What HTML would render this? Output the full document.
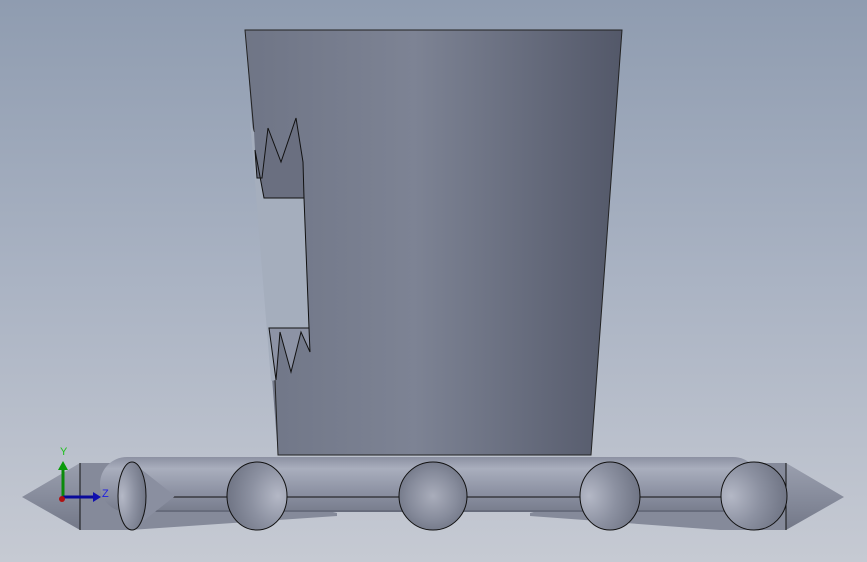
<!DOCTYPE html>
<html><head><style>html,body{margin:0;padding:0;width:867px;height:562px;overflow:hidden}</style></head>
<body>
<svg width="867" height="562" viewBox="0 0 867 562" xmlns="http://www.w3.org/2000/svg">
<defs>
<linearGradient id="bg" x1="0" y1="0" x2="0" y2="1">
<stop offset="0" stop-color="#8f9cb0"/><stop offset="0.5" stop-color="#aab3c3"/><stop offset="1" stop-color="#c6cad3"/></linearGradient>
<linearGradient id="cup" x1="245" y1="0" x2="622" y2="0" gradientUnits="userSpaceOnUse">
<stop offset="0" stop-color="#6f7586"/><stop offset="0.45" stop-color="#7d8394"/><stop offset="1" stop-color="#535869"/></linearGradient>
<linearGradient id="bar" x1="0" y1="457" x2="0" y2="515" gradientUnits="userSpaceOnUse">
<stop offset="0" stop-color="#8c91a2"/><stop offset="0.2" stop-color="#a9aebd"/><stop offset="0.6" stop-color="#8d92a3"/><stop offset="1" stop-color="#747989"/></linearGradient>
<radialGradient id="coneR" cx="0.85" cy="0.5" r="0.9">
<stop offset="0" stop-color="#b4b8c6"/><stop offset="0.5" stop-color="#8c91a1"/><stop offset="1" stop-color="#6c7181"/></radialGradient>
<radialGradient id="coneL" cx="0.15" cy="0.5" r="0.9">
<stop offset="0" stop-color="#b4b8c6"/><stop offset="0.5" stop-color="#8c91a1"/><stop offset="1" stop-color="#6c7181"/></radialGradient>
<radialGradient id="coneC" cx="0.5" cy="0.5" r="0.6">
<stop offset="0" stop-color="#a9adbb"/><stop offset="0.6" stop-color="#868b9b"/><stop offset="1" stop-color="#6c7181"/></radialGradient>
<linearGradient id="tip" x1="0" y1="0" x2="0" y2="1">
<stop offset="0" stop-color="#9a9fae"/><stop offset="0.5" stop-color="#878c9c"/><stop offset="1" stop-color="#737888"/></linearGradient>
</defs>
<rect width="867" height="562" fill="url(#bg)"/>
<polygon points="245,30 622,30 591,455 278,455" fill="url(#cup)"/>
<polyline points="254,132 245,30 622,30 591,455 278,455 275,380" fill="none" stroke="#222"/>
<polygon points="254,132 255,150 264,198 304,198 309,328 269,328 276,380 271,381 250,120" fill="#a5aebd"/>
<polygon points="255,150 264,198 304,198 303,162 296,118 281,162 268,128 262,178 257,178" fill="#6a6f80" stroke="#111" stroke-width="1"/>
<polygon points="269,328 309,328 310,352 301,332 291,372 280,332 276,380" fill="#8d93a5" stroke="#111" stroke-width="1"/>
<polyline points="264,198 304,198 309,328 269,328" fill="none" stroke="#111"/>
<polygon points="80,463 130,463 337,513 337,516 130,530 80,530" fill="#858a9a"/>
<polygon points="786,463 720,463 530,513 530,516 720,530 786,530" fill="#858a9a"/>
<polygon points="80,463 22,497 80,530" fill="url(#tip)"/>
<polygon points="786,463 844,497 786,530" fill="url(#tip)"/>
<line x1="80" y1="463" x2="80" y2="530" stroke="#111"/>
<line x1="786" y1="463" x2="786" y2="530" stroke="#111"/>
<rect x="100" y="457" width="660" height="55" rx="27" fill="url(#bar)"/>
<line x1="145" y1="497" x2="725" y2="497" stroke="#111"/>
<line x1="145" y1="511" x2="725" y2="511" stroke="#555a6a"/>
<polygon points="132,462 175,496 132,530" fill="#8a8fa0"/>
<polygon points="754,462 790,496 754,530" fill="#8a8fa0"/>
<g stroke="#111" stroke-width="1">
<ellipse cx="132" cy="496" rx="14" ry="34" fill="url(#coneL)"/>
<ellipse cx="257" cy="496" rx="30" ry="34" fill="url(#coneR)"/>
<ellipse cx="433" cy="496" rx="34" ry="34" fill="url(#coneC)"/>
<ellipse cx="610" cy="496" rx="30" ry="34" fill="url(#coneL)"/>
<ellipse cx="754" cy="496" rx="33" ry="34" fill="url(#coneL)"/>
</g>
<line x1="63" y1="498" x2="63" y2="468" stroke="#0a8a0a" stroke-width="3"/>
<polygon points="58,470 68,470 63,461" fill="#0a9a0a"/>
<line x1="63" y1="497" x2="94" y2="497" stroke="#0a0a9a" stroke-width="3"/>
<polygon points="93,492 93,502 101,497" fill="#1010b0"/>
<circle cx="62" cy="499" r="3" fill="#b01010"/>
<text x="60" y="455" font-family="Liberation Sans, sans-serif" font-size="11" fill="#20c020">Y</text>
<text x="102" y="497" font-family="Liberation Sans, sans-serif" font-size="11" fill="#2020e0">Z</text>
</svg>
</body></html>
